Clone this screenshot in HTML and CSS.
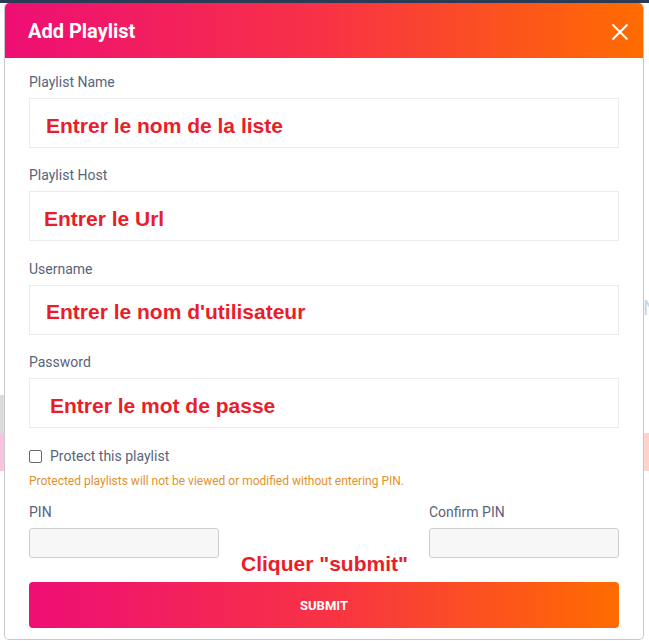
FILE: index.html
```html
<!DOCTYPE html>
<html lang="en">
<head>
<meta charset="utf-8">
<title>Add Playlist</title>
<link rel="stylesheet" href="styles.css">
</head>
<body>
<div class="topbar"></div>
<div class="bg-piece bg-left-gray"></div>
<div class="bg-piece bg-left-pink"></div>
<div class="bg-piece bg-right-pink"></div>
<div class="bg-piece bg-right-letter">N</div>

<div class="modal">
  <div class="modal-header">
    <h1 class="modal-title">Add Playlist</h1>
    <svg class="close" width="18" height="18" viewBox="0 0 18 18" aria-hidden="true">
      <path d="M1.5 1.5 L16.5 16.5 M16.5 1.5 L1.5 16.5" stroke="#fff" stroke-width="2" fill="none"/>
    </svg>
  </div>
  <div class="modal-body">
    <div class="field">
      <div class="label">Playlist Name</div>
      <div class="input-box"><span class="note pad-17">Entrer le nom de la liste</span></div>
    </div>
    <div class="field">
      <div class="label">Playlist Host</div>
      <div class="input-box"><span class="note pad-15">Entrer le Url</span></div>
    </div>
    <div class="field">
      <div class="label">Username</div>
      <div class="input-box"><span class="note pad-17">Entrer le nom d'utilisateur</span></div>
    </div>
    <div class="field">
      <div class="label">Password</div>
      <div class="input-box"><span class="note pad-21">Entrer le mot de passe</span></div>
    </div>

    <label class="check-row"><span class="checkbox"></span><span class="check-text">Protect this playlist</span></label>
    <div class="help">Protected playlists will not be viewed or modified without entering PIN.</div>

    <div class="pin-row">
      <div class="pin-col">
        <div class="label">PIN</div>
        <div class="pin-box"></div>
      </div>
      <div class="pin-col">
        <div class="label">Confirm PIN</div>
        <div class="pin-box"></div>
      </div>
    </div>
    <div class="submit-note">Cliquer "submit"</div>
    <div class="submit">SUBMIT</div>
  </div>
</div>
</body>
</html>
```
FILE: styles.css
```css
html, body {
  margin: 0;
  padding: 0;
  background: #ffffff;
}
body {
  position: relative;
  width: 649px;
  height: 641px;
  overflow: hidden;
  font-family: Roboto, "Liberation Sans", sans-serif;
}
.topbar {
  height: 3px;
  background: #2b3a55;
}
.bg-piece {
  position: absolute;
}
.bg-left-gray {
  left: 0;
  top: 395px;
  width: 4px;
  height: 38px;
  background: #dcdcdc;
}
.bg-left-pink {
  left: 0;
  top: 433px;
  width: 4px;
  height: 38px;
  background: #f8c3dc;
}
.bg-right-pink {
  left: 644px;
  top: 433px;
  width: 5px;
  height: 38px;
  background: #fdd3ca;
}
.bg-right-letter {
  left: 643px;
  top: 296px;
  font-size: 20px;
  line-height: 24px;
  color: #c9d5ea;
}
.modal {
  position: relative;
  margin-left: 4px;
  width: 638px;
  height: 636px;
  border: 1px solid #c8c8c8;
  border-top: none;
  border-radius: 5px;
  background: #fff;
  overflow: hidden;
}
.modal-header {
  height: 55px;
  display: flex;
  align-items: center;
  justify-content: space-between;
  padding: 0 15px 0 24px;
  background: linear-gradient(90deg, #ee0e75 0%, #f83245 50%, #ff6c00 100%);
  border-radius: 5px 5px 0 0;
  margin: 0 -1px;
}
.modal-title {
  margin: 0;
  color: #fff;
  font-size: 20px;
  font-weight: 700;
  line-height: 24px;
  padding-top: 1px;
}
.close {
  display: block;
  margin-top: 2px;
}
.modal-body {
  padding: 16px 24px 0 24px;
}
.field {
  margin-bottom: 19.4px;
}
.label {
  font-size: 14px;
  line-height: 16px;
  color: #59637a;
  margin-bottom: 8px;
}
.input-box {
  border: 1px solid #ebebeb;
  display: flex;
  align-items: center;
  padding-top: 5px;
  box-sizing: border-box;
  height: 50px;
}
.note {
  font-family: "Liberation Sans", Arial, sans-serif;
  font-weight: 700;
  font-size: 21px;
  line-height: 24px;
  color: #ea1d2a;
}
.pad-15 { padding-left: 14px; }
.pad-17 { padding-left: 16px; }
.pad-21 { padding-left: 20px; }
.check-row {
  display: flex;
  align-items: center;
  height: 18px;
  margin-top: -0.5px;
}
.checkbox {
  width: 11px;
  height: 11px;
  border: 1px solid #6a6a6a;
  border-radius: 2px;
  margin-right: 8px;
  background: #fff;
}
.check-text {
  font-size: 14px;
  color: #59637a;
  line-height: 18px;
}
.help {
  margin-top: 8px;
  font-size: 12px;
  line-height: 16px;
  color: #e0922c;
}
.pin-row {
  display: flex;
  justify-content: space-between;
  margin-top: 15px;
}
.pin-col {
  width: 190px;
}
.pin-box {
  height: 30px;
  box-sizing: border-box;
  border: 1px solid #cfcfcf;
  border-radius: 3px;
  background: #f7f7f7;
}
.submit-note {
  height: 24px;
  line-height: 12px;
  padding-left: 212px;
  font-family: "Liberation Sans", Arial, sans-serif;
  font-weight: 700;
  font-size: 21px;
  color: #ea1d2a;
}
.submit {
  height: 46px;
  border-radius: 4px;
  background: linear-gradient(90deg, #ee0e75 0%, #f83245 50%, #ff6c00 100%);
  color: #fff;
  font-size: 13px;
  font-weight: 700;
  display: flex;
  align-items: center;
  justify-content: center;
}
```
